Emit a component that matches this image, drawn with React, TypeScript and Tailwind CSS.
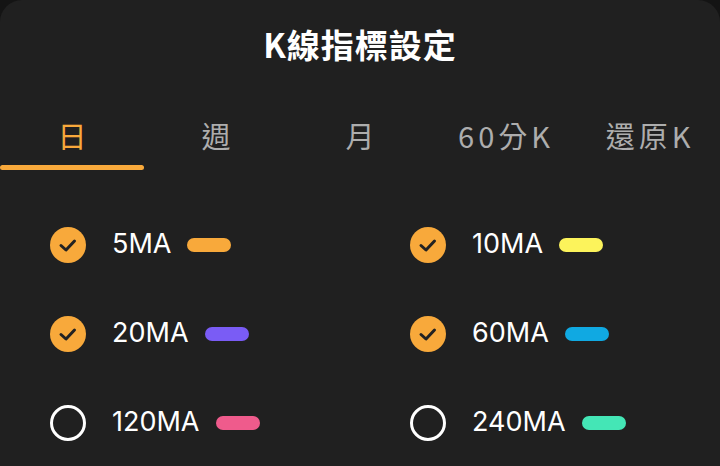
import { useState } from 'react'

const tabs = ['日', '週', '月', '60分K', '還原K']

const lines = [
  { name: '5MA', color: 'bg-[#f8a93b]', on: true },
  { name: '10MA', color: 'bg-[#fcf35b]', on: true },
  { name: '20MA', color: 'bg-[#7a5cf5]', on: true },
  { name: '60MA', color: 'bg-[#10a9e2]', on: true },
  { name: '120MA', color: 'bg-[#ef5b8c]', on: false },
  { name: '240MA', color: 'bg-[#44e6b6]', on: false },
]

function Check({ on }: { on: boolean }) {
  if (!on) {
    return (
      <span className="w-[36px] h-[36px] rounded-full border-[3px] border-white shrink-0" />
    )
  }
  return (
    <span className="w-[36px] h-[36px] rounded-full bg-[#f8a93b] flex items-center justify-center shrink-0">
      <svg width="24" height="24" viewBox="0 0 24 24" fill="none">
        <path
          d="M5 12.5 L10 17 L18.5 8"
          stroke="#222222"
          strokeWidth="3"
          strokeLinecap="round"
          strokeLinejoin="round"
        />
      </svg>
    </span>
  )
}

export default function App() {
  const [active, setActive] = useState(0)

  return (
    <div className="w-[720px] h-[466px] bg-[#141414] overflow-hidden">
      <div
        className="h-full bg-[#202020] rounded-t-[22px] text-white"
        style={{ fontFamily: 'Inter, "Noto Sans CJK TC", sans-serif' }}
      >
        {/* Title */}
        <div className="h-[90px] flex items-center justify-center">
          <h1
            className="text-[33px] font-bold tracking-[1px]"
            style={{ fontFamily: '"Noto Sans CJK TC", sans-serif' }}
          >
            K線指標設定
          </h1>
        </div>

        {/* Tabs */}
        <div className="grid grid-cols-5">
          {tabs.map((t, i) => (
            <button
              key={t}
              onClick={() => setActive(i)}
              className="h-[80px] flex flex-col items-center justify-end"
              style={{ fontFamily: '"Noto Sans CJK TC", sans-serif' }}
            >
              <span
                className={`text-[29px] leading-[34px] tracking-[4px] pl-[4px] ${
                  i === active ? 'text-[#f8a93b]' : 'text-[#adadad]'
                }`}
              >
                {t}
              </span>
              <span
                className={`mt-[13px] h-[5px] w-full rounded-full ${
                  i === active ? 'bg-[#f8a93b]' : 'bg-transparent'
                }`}
              />
            </button>
          ))}
        </div>

        {/* MA list */}
        <div className="grid grid-cols-2 pt-[30px]">
          {lines.map((l) => (
            <div key={l.name} className="h-[89px] flex items-center pl-[50px]">
              <Check on={l.on} />
              <span className="ml-[26px] text-[27px] text-white">{l.name}</span>
              <span className={`ml-[16px] w-[44px] h-[14px] rounded-full ${l.color}`} />
            </div>
          ))}
        </div>
      </div>
    </div>
  )
}
